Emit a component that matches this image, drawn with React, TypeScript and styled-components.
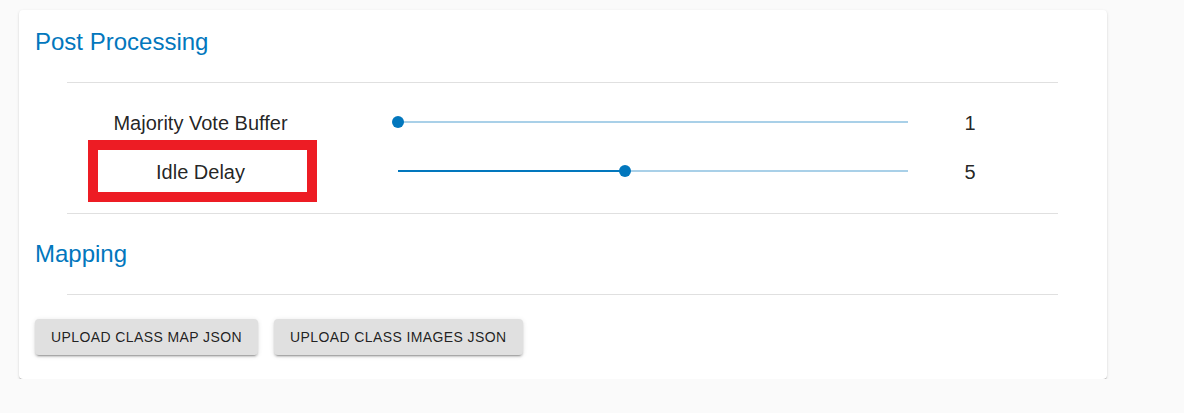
import React from 'react';
import styled, { createGlobalStyle } from 'styled-components';

const GlobalStyle = createGlobalStyle`
    body {
        margin: 0;
        background: #fafafa;
        font-family: 'Liberation Sans', Arial, sans-serif;
    }
`;

const Page = styled.div`
    padding: 10px 0 0 19px;
`;

const Card = styled.div`
    width: 1088px;
    box-sizing: border-box;
    padding: 16px 16px 24px;
    background: #ffffff;
    border-radius: 4px;
    box-shadow: 0px 2px 1px -1px rgba(0, 0, 0, 0.2), 0px 1px 1px 0px rgba(0, 0, 0, 0.14),
        0px 1px 3px 0px rgba(0, 0, 0, 0.12);
`;

const SectionTitle = styled.h2`
    margin: 0 0 24px;
    font-size: 24px;
    line-height: 32px;
    font-weight: 400;
    color: #0277bd;
`;

const Divider = styled.hr`
    margin: 0 33px 0 32px;
    border: none;
    height: 1px;
    background: #e0e0e0;
`;

const Rows = styled.div`
    padding: 14px 0 18px;
`;

const SliderRow = styled.div`
    display: flex;
    align-items: center;
    height: 49px;
    padding-left: 63px;
`;

const Label = styled.div<{ $highlight?: boolean }>`
    width: 209px;
    height: 42px;
    box-sizing: border-box;
    padding: 3px 4px 0 0;
    display: flex;
    align-items: center;
    justify-content: center;
    font-size: 20px;
    color: rgba(0, 0, 0, 0.87);
    outline: ${(p) => (p.$highlight ? '10px solid #ed1c24' : 'none')};
`;

const SliderBox = styled.div`
    position: relative;
    width: 510px;
    height: 2px;
    margin-left: 91px;
    background: #a9d0e8;
`;

const SliderFill = styled.div`
    height: 100%;
    background: #0277bd;
`;

const Thumb = styled.div`
    position: absolute;
    top: 50%;
    width: 12px;
    height: 12px;
    margin: -6px 0 0 -6px;
    border-radius: 50%;
    background: #0277bd;
`;

const Value = styled.div`
    width: 124px;
    padding-top: 3px;
    text-align: center;
    font-size: 20px;
    color: rgba(0, 0, 0, 0.87);
`;

const Mapping = styled(SectionTitle)`
    margin-top: 24px;
`;

const ButtonBar = styled.div`
    display: flex;
    gap: 16px;
    margin-top: 24px;
`;

const UploadButton = styled.button`
    height: 36px;
    padding: 0 16px;
    border: none;
    border-radius: 4px;
    background: #e0e0e0;
    color: rgba(0, 0, 0, 0.87);
    font-family: 'Liberation Sans', Arial, sans-serif;
    font-size: 14px;
    letter-spacing: 0.4px;
    text-transform: uppercase;
    box-shadow: 0px 3px 1px -2px rgba(0, 0, 0, 0.2), 0px 2px 2px 0px rgba(0, 0, 0, 0.14),
        0px 1px 5px 0px rgba(0, 0, 0, 0.12);
    cursor: pointer;
`;

type SliderProps = { value: number; min: number; max: number };

function Slider({ value, min, max }: SliderProps) {
    const pct = ((value - min) / (max - min)) * 100;
    return (
        <SliderBox>
            <SliderFill style={{ width: `${pct}%` }} />
            <Thumb style={{ left: `${pct}%` }} />
        </SliderBox>
    );
}

const settings = [
    { label: 'Majority Vote Buffer', value: 1 },
    { label: 'Idle Delay', value: 5, highlight: true },
];

export default function App() {
    return (
        <Page>
            <GlobalStyle />
            <Card>
                <SectionTitle>Post Processing</SectionTitle>
                <Divider />
                <Rows>
                    {settings.map((s) => (
                        <SliderRow key={s.label}>
                            <Label $highlight={s.highlight}>{s.label}</Label>
                            <Slider value={s.value} min={1} max={10} />
                            <Value>{s.value}</Value>
                        </SliderRow>
                    ))}
                </Rows>
                <Divider />
                <Mapping>Mapping</Mapping>
                <Divider />
                <ButtonBar>
                    <UploadButton>Upload Class Map JSON</UploadButton>
                    <UploadButton>Upload Class Images JSON</UploadButton>
                </ButtonBar>
            </Card>
        </Page>
    );
}
